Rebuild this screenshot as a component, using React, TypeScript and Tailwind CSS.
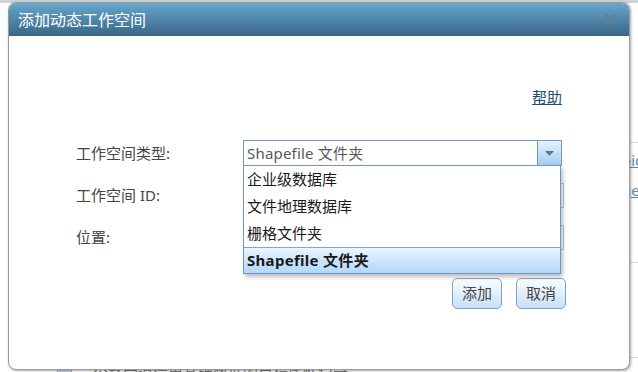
export default function App() {
  const items = ["企业级数据库", "文件地理数据库", "栅格文件夹"];

  return (
    <div className="relative w-[638px] h-[372px] overflow-hidden bg-white font-['Noto_Sans','Noto_Sans_CJK_SC',sans-serif]">
      {/* page behind the modal */}
      <div className="absolute inset-x-0 top-0 h-[3px] bg-[#cfd3d6]" />
      <div className="absolute left-[600px] top-[142px] w-[60px] border-t border-[#dcdcdc]" />
      <div className="absolute left-[600px] top-[262px] w-[60px] border-t border-[#dcdcdc]" />
      <div className="absolute left-[600px] top-[357px] w-[60px] border-t border-[#dcdcdc]" />
      <span className="absolute left-[622px] top-[150px] text-[15px] leading-5 text-[#5b88b5] underline">pic</span>
      <span className="absolute left-[622px] top-[180px] text-[15px] leading-5 text-[#5b88b5] underline">ge</span>
      <div className="absolute left-[57px] top-[365px] w-[15px] h-[14px] bg-[#c9d6e2] border border-[#9fb4c8]" />
      <span className="absolute left-[93px] top-[362px] text-[15px] leading-5 text-[#777]">公路管道清单基础数据的目标属性记录</span>

      {/* dialog */}
      <div className="absolute left-[8px] top-[2px] w-[622px] h-[368px] rounded-[8px] border border-[#9a9a9a] bg-white shadow-[1px_1px_3px_rgba(0,0,0,0.35)] overflow-hidden">
        <div className="h-[33px] flex items-center justify-between pl-[9px] pr-[13px] bg-gradient-to-b from-[#66a7cd] to-[#3a6788]">
          <span className="text-[16px] text-white">添加动态工作空间</span>
          <svg width="11" height="11" viewBox="0 0 11 11">
            <path d="M1.5 1.5 L9.5 9.5 M9.5 1.5 L1.5 9.5" stroke="#5f7f98" strokeWidth="2.6" strokeLinecap="round" />
          </svg>
        </div>

        <div className="pl-[67px] pt-[51px] text-[15px] text-[#454545]">
          <div className="w-[486px] flex justify-end">
            <a href="#" className="leading-5 underline text-[#1e4d74]">帮助</a>
          </div>

          <div className="mt-[33px] h-[26px] flex items-center">
            <span className="w-[167px]">工作空间类型:</span>
            <div className="relative w-[319px] h-[26px] flex border border-[#7097bd]">
              <div className="flex-1 flex items-center pl-[3px] tracking-[0.2px] text-[#585858]">Shapefile 文件夹</div>
              <div className="w-[24px] flex items-center justify-center border-l border-[#7097bd] bg-gradient-to-b from-[#e6f2fd] to-[#a3cdf3]">
                <svg width="9" height="5" viewBox="0 0 9 5">
                  <path d="M0 0 H9 L4.5 5 Z" fill="#66778a" />
                </svg>
              </div>

              <div className="absolute left-[-1px] top-[24px] z-10 w-[318px] border border-[#7097bd] bg-white text-[#1a1a1a] shadow-[2px_3px_4px_rgba(0,0,0,0.25)]">
                {items.map((it) => (
                  <div key={it} className="h-[27px] flex items-center pl-[3px]">{it}</div>
                ))}
                <div className="h-[26px] flex items-center pl-[3px] border-t border-[#7fa6cc] font-bold tracking-[0.3px] bg-gradient-to-b from-[#eaf5ff] to-[#b1d7fb]">
                  Shapefile 文件夹
                </div>
              </div>
            </div>
          </div>

          <div className="mt-[17px] h-[25px] flex items-center">
            <span className="w-[167px]">工作空间 ID:</span>
            <div className="w-[321px] h-[25px] border border-[#c4c4c4]" />
          </div>

          <div className="mt-[17px] h-[25px] flex items-center">
            <span className="w-[167px]">位置:</span>
            <div className="w-[321px] h-[25px] border border-[#c4c4c4]" />
          </div>

          <div className="mt-[28px] w-[490px] flex justify-end gap-[14px]">
            <button className="w-[50px] h-[31px] rounded-[5px] border border-[#7ea3c8] bg-gradient-to-b from-[#fbfdff] to-[#c8dff6] text-[#444]">添加</button>
            <button className="w-[50px] h-[31px] rounded-[5px] border border-[#7ea3c8] bg-gradient-to-b from-[#fbfdff] to-[#c8dff6] text-[#444]">取消</button>
          </div>
        </div>
      </div>
    </div>
  );
}
